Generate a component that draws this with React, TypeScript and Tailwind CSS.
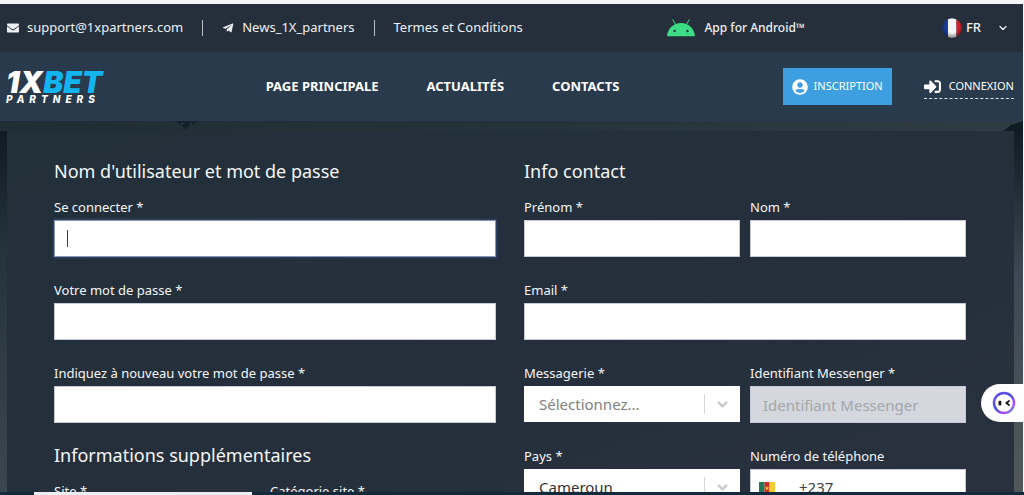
import type { ReactNode } from "react";
import { ChevronDown } from "lucide-react";
import { FaEnvelope, FaSignInAlt, FaTelegramPlane, FaUserCircle } from "react-icons/fa";

const inputClass =
  "block h-[37px] w-full border border-[#c5cad6] bg-white px-3 text-[15px] text-[#3c3f45] outline-none";

function Field({ id, label, children }: { id: string; label: string; children: ReactNode }) {
  return (
    <div className="flex min-w-0 flex-col gap-[3px]">
      <label htmlFor={id} className="text-[13px] leading-5 whitespace-nowrap text-[#f4f6f8]">
        {label}
      </label>
      {children}
    </div>
  );
}

function Heading({ children }: { children: ReactNode }) {
  return <h2 className="mb-3 text-lg leading-7 text-[#f4f6f8]">{children}</h2>;
}

function SelectBox({ id, options, muted }: { id: string; options: string[]; muted?: boolean }) {
  return (
    <div className="relative">
      <select
        id={id}
        className={
          muted
            ? "block h-9 w-full appearance-none bg-white px-[15px] text-[15px] text-[#808080] outline-none"
            : "block h-9 w-full appearance-none bg-white px-[15px] text-[15px] text-[#333333] outline-none"
        }
      >
        {options.map((option) => (
          <option key={option}>{option}</option>
        ))}
      </select>
      <span className="pointer-events-none absolute inset-y-2 right-0 flex items-center border-l border-[#d4d6da] px-[10px]">
        <ChevronDown className="size-[15px] text-[#c8cacd]" strokeWidth={4} />
      </span>
    </div>
  );
}

function Android() {
  return (
    <svg viewBox="0 0 28 18" className="h-[18px] w-7" aria-hidden="true">
      <path d="M5.800.8 8.800 6M22.200.8 19.200 6" stroke="#3ddc84" strokeWidth="1" strokeLinecap="round" />
      <path d="M0 17.300C.6 9.500 6.300 4 14 4s13.400 5.500 14 13.300Z" fill="#3ddc84" />
      <circle cx="7.600" cy="12" r="1.200" fill="#1f3c3a" />
      <circle cx="20.400" cy="12" r="1.200" fill="#1f3c3a" />
    </svg>
  );
}

function FrenchFlag() {
  return (
    <svg viewBox="0 0 20 20" className="size-5" aria-hidden="true">
      <defs>
        <clipPath id="round">
          <circle cx="10" cy="10" r="9.800" />
        </clipPath>
        <radialGradient id="shine" cx="50%" cy="40%" r="60%">
          <stop offset="55%" stopColor="#000" stopOpacity="0" />
          <stop offset="100%" stopColor="#000" stopOpacity=".45" />
        </radialGradient>
      </defs>
      <g clipPath="url(#round)">
        <path d="M0 0h6v20H0z" fill="#1c3f9c" />
        <path d="M6 0h8.500v20H6z" fill="#f6f6f8" />
        <path d="M14.500 0H20v20h-5.500z" fill="#d8232f" />
        <path d="M0 0h20v20H0z" fill="url(#shine)" />
      </g>
    </svg>
  );
}

function CameroonFlag() {
  return (
    <svg viewBox="0 0 16 12" className="h-3 w-4 shrink-0" aria-hidden="true">
      <path d="M0 0h5.500v12H0z" fill="#237a57" />
      <path d="M5.500 0h5v12h-5z" fill="#ce2a2a" />
      <path d="M10.500 0H16v12h-5.500z" fill="#f2cb2e" />
      <path d="m8 3.800.6 1.600h1.700L9 6.500l.5 1.700L8 7.200l-1.500 1 .5-1.700-1.300-1.100h1.700Z" fill="#f2cb2e" />
    </svg>
  );
}

function Divider() {
  return <span className="h-4 w-px bg-[#b9bfc6]" />;
}

function TopBar() {
  return (
    <div className="flex h-12 items-center justify-between bg-[#252f3b] pr-[14px] pl-[7px] text-[13px] whitespace-nowrap text-[#eef1f4]">
      <div className="flex items-center gap-[19px]">
        <a href="#support" className="flex items-center gap-2">
          <FaEnvelope className="size-3" />
          support@1xpartners.com
        </a>
        <Divider />
        <a href="#news" className="flex items-center gap-2">
          <FaTelegramPlane className="size-3" />
          News_1X_partners
        </a>
        <Divider />
        <a href="#terms">Termes et Conditions</a>
      </div>
      <a href="#android" className="flex items-center gap-[9px] pl-2 text-xs font-medium">
        <Android />
        App for Android™
      </a>
      <button type="button" className="flex items-center gap-1 font-medium">
        <FrenchFlag />
        FR
        <ChevronDown className="ml-3 size-3" strokeWidth={2.500} />
      </button>
    </div>
  );
}

function Header() {
  return (
    <header className="flex h-[69px] items-center justify-between bg-[#293a4c] pr-[9px] pl-[6px] font-bold whitespace-nowrap text-white">
      <a href="#home" className="flex flex-col font-['Inter',sans-serif] italic">
        <span className="text-[30px] leading-6 font-black">
          1X<span className="text-[#13b5f0]">BET</span>
        </span>
        <span className="text-[10px] leading-[10px] font-extrabold tracking-[5px]">PARTNERS</span>
      </a>
      <nav className="flex gap-12 text-[13px]">
        <a href="#home">PAGE PRINCIPALE</a>
        <a href="#actualites">ACTUALITÉS</a>
        <a href="#contacts">CONTACTS</a>
      </nav>
      <div className="flex items-center gap-8 text-[11px] font-normal">
        <button type="button" className="flex h-[37px] items-center gap-[6px] bg-[#3d9fe0] px-[9px]">
          <FaUserCircle className="size-4" />
          INSCRIPTION
        </button>
        <a href="#login" className="flex h-[25px] items-center gap-2 border-b border-dashed border-[#dfe5ea]">
          <FaSignInAlt className="size-[17px]" />
          CONNEXION
        </a>
      </div>
    </header>
  );
}

function Account() {
  return (
    <section className="min-w-0">
      <Heading>Nom d'utilisateur et mot de passe</Heading>
      <div className="flex flex-col gap-[23px]">
        <Field id="login" label="Se connecter *">
          <div className="relative">
            <input
              id="login"
              className="block h-[37px] w-full border border-[#8694b8] bg-white px-3 text-[15px] text-[#3c3f45] caret-transparent shadow-[0_0_2px_1px_#34456f] outline-none"
            />
            <span className="absolute top-[10px] left-[13px] h-[17px] w-px bg-[#3c3f52]" />
          </div>
        </Field>
        <Field id="password" label="Votre mot de passe *">
          <input id="password" type="password" className={inputClass} />
        </Field>
        <Field id="repeat" label="Indiquez à nouveau votre mot de passe *">
          <input id="repeat" type="password" className={inputClass} />
        </Field>
      </div>
      <div className="mt-[18px]">
        <Heading>Informations supplémentaires</Heading>
        <div className="grid grid-cols-2 gap-[10px] pr-5">
          <Field id="site" label="Site *">
            <input id="site" className={inputClass} />
          </Field>
          <Field id="category" label="Catégorie site *">
            <SelectBox id="category" options={["Sélectionnez..."]} muted />
          </Field>
        </div>
      </div>
    </section>
  );
}

function Contact() {
  return (
    <section className="min-w-0">
      <Heading>Info contact</Heading>
      <div className="grid grid-cols-2 gap-x-[10px] gap-y-[23px]">
        <Field id="first" label="Prénom *">
          <input id="first" className={inputClass} />
        </Field>
        <Field id="last" label="Nom *">
          <input id="last" className={inputClass} />
        </Field>
        <div className="col-span-2">
          <Field id="email" label="Email *">
            <input id="email" type="email" className={inputClass} />
          </Field>
        </div>
        <Field id="messenger" label="Messagerie *">
          <SelectBox id="messenger" options={["Sélectionnez..."]} muted />
        </Field>
        <Field id="messenger-id" label="Identifiant Messenger *">
          <input
            id="messenger-id"
            disabled
            placeholder="Identifiant Messenger"
            className="block h-[37px] w-full border border-[#c5cad6] bg-[#d4d7dd] px-3 text-[15px] placeholder:text-[#a3a6ab]"
          />
        </Field>
        <Field id="country" label="Pays *">
          <SelectBox id="country" options={["Cameroun"]} />
        </Field>
        <Field id="phone" label="Numéro de téléphone">
          <div className="flex h-[37px] items-center gap-6 border border-[#c5cad6] bg-white px-2">
            <CameroonFlag />
            <input
              id="phone"
              type="tel"
              defaultValue="+237"
              className="w-full min-w-0 bg-transparent text-[15px] text-[#3c3f45] outline-none"
            />
          </div>
        </Field>
      </div>
    </section>
  );
}

function Assistant() {
  return (
    <button
      type="button"
      aria-label="Assistant"
      className="fixed right-0 bottom-[73px] flex h-[38px] w-[43px] items-center rounded-l-full bg-white pl-[11px]"
    >
      <svg viewBox="0 0 24 24" className="size-6">
        <defs>
          <linearGradient id="ring" x1="0" y1="0" x2="1" y2="1">
            <stop offset="0%" stopColor="#6a4df0" />
            <stop offset="45%" stopColor="#4b50e0" />
            <stop offset="75%" stopColor="#b44be8" />
            <stop offset="100%" stopColor="#38b6f5" />
          </linearGradient>
        </defs>
        <circle cx="12" cy="12" r="10" fill="#fff" stroke="url(#ring)" strokeWidth="2.500" />
        <rect x="6.500" y="9.700" width="2.800" height="4.800" rx="1" fill="#17181f" />
        <path d="m17 10-2.600 2 2.600 2" fill="none" stroke="#17181f" strokeWidth="1.800" strokeLinecap="round" />
      </svg>
    </button>
  );
}

export default function App() {
  return (
    <div className="flex h-screen flex-col overflow-hidden bg-[#f4f5f7] font-['Noto_Sans','Open_Sans',sans-serif]">
      <div className="mr-px flex min-h-0 flex-1 flex-col pt-1">
        <TopBar />
        <Header />
        <main className="relative flex min-h-0 flex-1 flex-col bg-[#222e38]">
          <div className="h-[10px] shrink-0 bg-linear-to-r from-[#202d35] via-[#24323a] to-[#2f3c44]" />
          <svg viewBox="0 0 24 10" className="absolute top-0 left-[174px] h-[10px] w-6" aria-hidden="true">
            <path d="M1 0h22l-3 3-4 1-4 5-5-5Z" fill="#14212b" />
            <path d="m7 2 3 0-2 2Zm8 1 3-2-1 3Z" fill="#2f3e48" />
          </svg>
          <svg viewBox="0 0 20 10" className="absolute top-0 right-0 h-[10px] w-5" aria-hidden="true">
            <path d="M0 10 8 4 20 0v10Z" fill="#0f1c24" />
          </svg>
          <div className="flex min-h-0 flex-1">
            <div className="w-[7px] shrink-0 bg-linear-to-b from-[#0e1b23] via-[#24323b] via-30% to-[#3b474f]" />
            <div className="min-w-0 flex-1 overflow-hidden bg-linear-to-br from-[#22303a] via-[#242f3b] to-[#29313e] pt-[26px] pr-12 pl-[47px]">
              <form className="grid grid-cols-2 gap-7">
                <Account />
                <Contact />
              </form>
            </div>
            <div className="w-[9px] shrink-0 bg-linear-to-b from-[#101d24] via-[#3d4854] via-40% to-[#50585a]" />
          </div>
        </main>
      </div>
      <footer className="flex h-[3px] shrink-0 bg-[#14293b] pl-[34px]">
        <div className="w-[218px] bg-[#eceef1]" />
      </footer>
      <Assistant />
    </div>
  );
}
